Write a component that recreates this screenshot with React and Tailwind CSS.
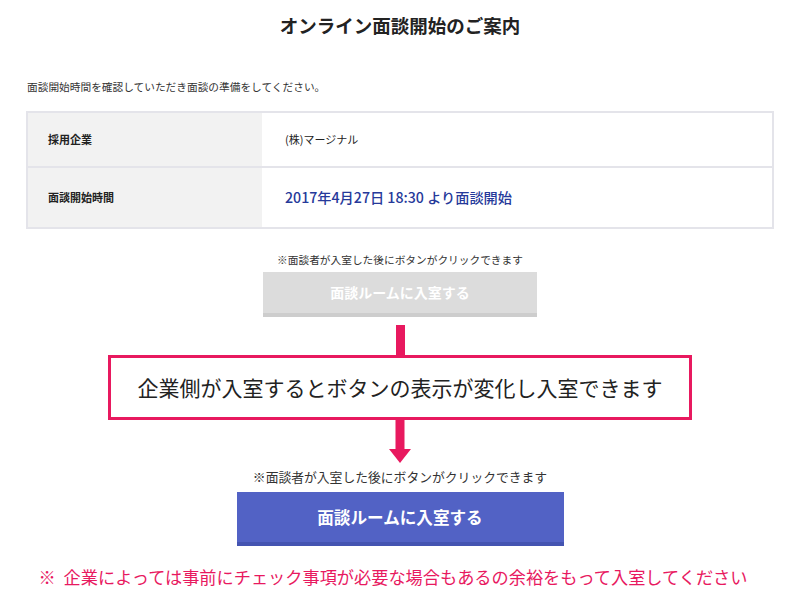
export default function App() {
  const font = { fontFamily: '"Noto Sans CJK JP", "Noto Sans", sans-serif' };
  return (
    <div className="w-[800px] h-[600px] bg-white flex flex-col items-center text-[#222]" style={font}>
      <h1 className="mt-[12px] text-[18.5px] leading-[26px] font-bold text-[#222]">オンライン面談開始のご案内</h1>
      <p className="mt-[41px] self-start ml-[27px] text-[10.7px] leading-[16px] text-[#333]">
        面談開始時間を確認していただき面談の準備をしてください。
      </p>
      <div className="mt-[16px] w-[748px] border-2 border-[#e4e4ea] flex flex-col">
        <div className="flex h-[55px] border-b-2 border-[#e4e4ea]">
          <div className="w-[234px] bg-[#f2f2f2] flex items-center pl-[20px] text-[11px] font-bold">採用企業</div>
          <div className="flex-1 flex items-center pl-[23px] text-[11px]">(株)マージナル</div>
        </div>
        <div className="flex h-[59px]">
          <div className="w-[234px] bg-[#f2f2f2] flex items-center pl-[20px] text-[11px] font-bold">面談開始時間</div>
          <div className="flex-1 flex items-center pl-[23px] text-[14.2px] font-medium text-[#26399a]">
            2017年4月27日 18:30 より面談開始
          </div>
        </div>
      </div>
      <p className="mt-[23px] text-[10.7px] leading-[16px] text-[#333]">※面談者が入室した後にボタンがクリックできます</p>
      <div className="mt-[4px] w-[274px] h-[45px] bg-[#dcdcdc] border-b-4 border-[#cdcdcd] flex items-center justify-center text-white text-[14px] font-bold">
        面談ルームに入室する
      </div>
      <div className="mt-[8px] w-[9px] h-[30px] bg-[#e8195f]" />
      <div className="w-[584px] h-[65px] border-[3px] border-[#e8195f] flex items-center justify-center text-[21px] text-[#222]">
        企業側が入室するとボタンの表示が変化し入室できます
      </div>
      <svg width="22" height="43" viewBox="0 0 22 43" className="block">
        <rect x="6.5" y="0" width="9" height="30" fill="#e8195f" />
        <polygon points="0,29 22,29 11,43" fill="#e8195f" />
      </svg>
      <p className="mt-[5px] text-[12.8px] leading-[18px] text-[#333]">※面談者が入室した後にボタンがクリックできます</p>
      <div className="mt-[6px] w-[327px] h-[54px] bg-[#5262c5] border-b-4 border-[#4454b1] flex items-center justify-center text-white text-[16.6px] font-bold">
        面談ルームに入室する
      </div>
      <p className="mt-[19px] ml-[-14px] text-[17.2px] leading-[24px] text-[#e8195f]">
        <span className="mr-[4px]">※</span> 企業によっては事前にチェック事項が必要な場合もあるの余裕をもって入室してください
      </p>
    </div>
  );
}
